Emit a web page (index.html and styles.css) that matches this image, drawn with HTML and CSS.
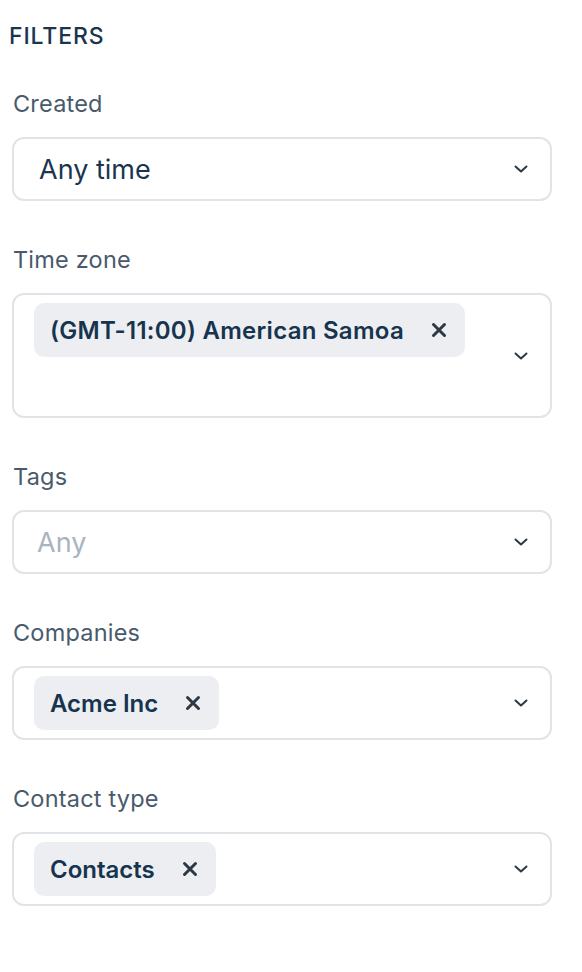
FILE: index.html
```html
<!DOCTYPE html>
<html>
<head>
<meta charset="utf-8">
<link rel="stylesheet" href="styles.css">
</head>
<body>
<div class="panel">
  <h2 class="title">FILTERS</h2>

  <div class="field">
    <div class="label">Created</div>
    <div class="select single">
      <span class="value">Any time</span>
      <svg class="chev" width="14" height="8" viewBox="0 0 14 8"><path d="M1.5 1.5 L7 6.5 L12.5 1.5" fill="none" stroke="#2d3843" stroke-width="2" stroke-linecap="round" stroke-linejoin="round"/></svg>
    </div>
  </div>

  <div class="field">
    <div class="label">Time zone</div>
    <div class="select multi">
      <div class="items">
        <span class="chip"><span class="tz">(GMT-11:00) American Samoa</span><svg class="x" width="16" height="16" viewBox="0 0 16 16"><path d="M2.5 2.5 L13.5 13.5 M13.5 2.5 L2.5 13.5" stroke="#2d3843" stroke-width="3" stroke-linecap="round"/></svg></span>
        <div class="input-row"></div>
      </div>
      <svg class="chev" width="14" height="8" viewBox="0 0 14 8"><path d="M1.5 1.5 L7 6.5 L12.5 1.5" fill="none" stroke="#2d3843" stroke-width="2" stroke-linecap="round" stroke-linejoin="round"/></svg>
    </div>
  </div>

  <div class="field">
    <div class="label">Tags</div>
    <div class="select single">
      <span class="placeholder">Any</span>
      <svg class="chev" width="14" height="8" viewBox="0 0 14 8"><path d="M1.5 1.5 L7 6.5 L12.5 1.5" fill="none" stroke="#2d3843" stroke-width="2" stroke-linecap="round" stroke-linejoin="round"/></svg>
    </div>
  </div>

  <div class="field">
    <div class="label">Companies</div>
    <div class="select multi">
      <div class="items">
        <span class="chip">Acme Inc<svg class="x" width="16" height="16" viewBox="0 0 16 16"><path d="M2.5 2.5 L13.5 13.5 M13.5 2.5 L2.5 13.5" stroke="#2d3843" stroke-width="3" stroke-linecap="round"/></svg></span>
      </div>
      <svg class="chev" width="14" height="8" viewBox="0 0 14 8"><path d="M1.5 1.5 L7 6.5 L12.5 1.5" fill="none" stroke="#2d3843" stroke-width="2" stroke-linecap="round" stroke-linejoin="round"/></svg>
    </div>
  </div>

  <div class="field">
    <div class="label">Contact type</div>
    <div class="select multi">
      <div class="items">
        <span class="chip">Contacts<svg class="x" width="16" height="16" viewBox="0 0 16 16"><path d="M2.5 2.5 L13.5 13.5 M13.5 2.5 L2.5 13.5" stroke="#2d3843" stroke-width="3" stroke-linecap="round"/></svg></span>
      </div>
      <svg class="chev" width="14" height="8" viewBox="0 0 14 8"><path d="M1.5 1.5 L7 6.5 L12.5 1.5" fill="none" stroke="#2d3843" stroke-width="2" stroke-linecap="round" stroke-linejoin="round"/></svg>
    </div>
  </div>
</div>
</body>
</html>
```

FILE: styles.css
```css
* { box-sizing: border-box; }
html, body { margin: 0; padding: 0; background: #ffffff; }
body {
  font-family: Inter, "Open Sans", "Liberation Sans", sans-serif;
  color: #1b3550;
}
.panel {
  width: 552px;
  padding: 22px 0 0 12px;
}
.title {
  margin: 0 0 0 -3px;
  font-size: 23px;
  line-height: 28px;
  font-weight: 500;
  letter-spacing: 0.9px;
  color: #1b3550;
}
.field {
  margin-top: 40px;
}
.field + .field { margin-top: 45px; }
.label {
  font-size: 23.5px;
  line-height: 28px;
  color: #485a6b;
  margin-bottom: 19px;
  padding-left: 1px;
  letter-spacing: 0.2px;
}
.select {
  display: flex;
  align-items: center;
  border: 2px solid #e0e4e9;
  border-radius: 12px;
  background: #fff;
}
.single {
  height: 64px;
  padding: 0 22px 0 25px;
}
.value {
  flex: 1;
  font-size: 27px;
  color: #1b3550;
}
.placeholder {
  flex: 1;
  font-size: 27px;
  color: #a9b4c0;
  margin-left: -2px;
}
.chev { flex: none; }
.multi {
  padding: 8px 22px 8px 20px;
}
.items {
  flex: 1;
  display: flex;
  flex-direction: column;
  align-items: flex-start;
}
.input-row { height: 51px; }
.chip {
  display: inline-flex;
  align-items: center;
  height: 54px;
  padding: 0 18px 0 16px;
  border-radius: 10px;
  background: #eceef1;
  font-size: 24px;
  font-weight: 600;
  color: #17344f;
  gap: 27px;
}
.tz { letter-spacing: 0.27px; }
.x { flex: none; }
```
